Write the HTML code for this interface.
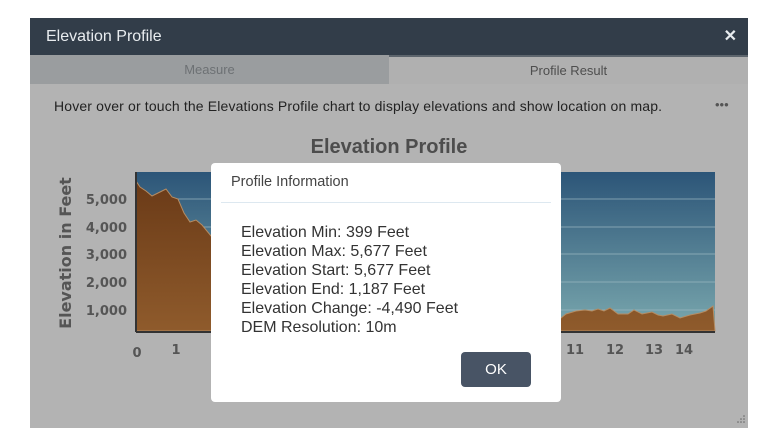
<!DOCTYPE html>
<html><head><style>
body{margin:0;width:779px;height:443px;background:#fff;font-family:"Liberation Sans",sans-serif;position:relative;overflow:hidden}
.win{position:absolute;left:30px;top:18px;width:718px;height:410px;background:#b3b3b3}
.hdr{position:absolute;left:0;top:0;width:718px;height:37px;background:#323d49;color:#e8ecef;font-size:16px;line-height:37px}
.hdr span{position:absolute;left:16px}
.hdr b{position:absolute;right:11px;font-size:16px}
.tab1{position:absolute;left:0;top:37px;width:359px;height:29px;background:#9a9d9f;color:#6d7174;font-size:13px;text-align:center;line-height:29px}
.tab2{position:absolute;left:359px;top:37px;width:359px;height:29px;background:#b0b0b0;color:#4e4e4e;font-size:13px;text-align:center;line-height:32px}
.tab2:before{content:"";position:absolute;left:0;top:0;width:359px;height:2px;background:#5d656d}
.hint{position:absolute;left:24px;top:80px;font-size:14px;letter-spacing:0.15px;color:#222}
.dots{position:absolute;left:685px;top:79px;font-size:13px;color:#555}
.ttl{position:absolute;left:0;width:718px;top:118px;text-align:center;font-size:20px;font-weight:bold;color:#4d4d4d}
.dlg{position:absolute;left:211px;top:163px;width:350px;height:239px;background:#fff;border-radius:4px}
.dlg .t{position:absolute;left:20px;top:11px;font-size:14.5px;color:#444}
.dlg .ln{position:absolute;left:10px;top:39px;width:330px;height:1px;background:#dde8f0}
.dlg .b{position:absolute;left:30px;top:60px;font-size:16px;line-height:19px;color:#333}
.ok{position:absolute;left:250px;top:189px;width:70px;height:35px;background:#485465;border-radius:4px;color:#fff;font-size:15px;text-align:center;line-height:35px}
</style></head><body>
<div class="win">
<div class="hdr"><span>Elevation Profile</span><b>✕</b></div>
<div class="tab1">Measure</div>
<div class="tab2">Profile Result</div>
<div class="hint">Hover over or touch the Elevations Profile chart to display elevations and show location on map.</div>
<div class="dots">•••</div>
<div class="ttl">Elevation Profile</div>
</div>
<svg style="position:absolute;left:0;top:0" width="779" height="443">
<defs>
<linearGradient id="sky" x1="0" y1="0" x2="0" y2="1"><stop offset="0" stop-color="#2c5578"/><stop offset="1" stop-color="#7aa8ae"/></linearGradient>
<linearGradient id="dirt" x1="0" y1="0" x2="0" y2="1"><stop offset="0" stop-color="#6a3a17"/><stop offset="1" stop-color="#8f5b2c"/></linearGradient>
</defs>
<rect x="136" y="172" width="579" height="159" fill="url(#sky)"/>
<g stroke="#9db9c2" stroke-width="1" opacity="0.7"><line x1="136" y1="199" x2="715" y2="199"/><line x1="136" y1="227" x2="715" y2="227"/><line x1="136" y1="254" x2="715" y2="254"/><line x1="136" y1="282" x2="715" y2="282"/><line x1="136" y1="310" x2="715" y2="310"/></g>
<path d="M136,181 L140,187 L146,191 L152,196 L160,192 L166,189 L172,197 L178,199 L184,213 L190,222 L196,220 L202,225 L211,236 L380,300 L561,318 L566,314 L576,311 L585,310 L592,311 L598,309 L604,311 L610,308 L618,314 L628,314 L634,310 L642,314 L652,312 L658,315 L663,316 L672,314 L680,318 L690,315 L700,313 L706,311 L713,306 L715,331 L136,331Z" fill="url(#dirt)" stroke="#b58c63" stroke-width="1"/>
<line x1="136" y1="172" x2="136" y2="332" stroke="#333" stroke-width="2"/>
<line x1="136" y1="332" x2="715" y2="332" stroke="#333" stroke-width="2"/>
<g font-family="DejaVu Sans" font-weight="bold" font-size="13" fill="#555" text-anchor="end">
<text x="127" y="204">5,000</text><text x="127" y="232">4,000</text><text x="127" y="259">3,000</text><text x="127" y="287">2,000</text><text x="127" y="315">1,000</text></g>
<g font-family="DejaVu Sans" font-weight="bold" font-size="13" fill="#555" text-anchor="middle">
<text x="137" y="357">0</text><text x="176" y="354">1</text><text x="575" y="354">11</text><text x="615" y="354">12</text><text x="654" y="354">13</text><text x="684" y="354">14</text></g>
<text transform="translate(71,253) rotate(-90)" font-family="DejaVu Sans" font-weight="bold" font-size="16" fill="#555" text-anchor="middle">Elevation in Feet</text>
<g fill="#666"><circle cx="744" cy="416" r="0.8"/><circle cx="741" cy="419" r="0.8"/><circle cx="744" cy="419" r="0.8"/><circle cx="738" cy="422" r="0.8"/><circle cx="741" cy="422" r="0.8"/><circle cx="744" cy="422" r="0.8"/></g>
</svg>
<div class="dlg"><div class="t">Profile Information</div><div class="ln"></div>
<div class="b">Elevation Min: 399 Feet<br>Elevation Max: 5,677 Feet<br>Elevation Start: 5,677 Feet<br>Elevation End: 1,187 Feet<br>Elevation Change: -4,490 Feet<br>DEM Resolution: 10m</div>
<div class="ok">OK</div></div>
</body></html>
